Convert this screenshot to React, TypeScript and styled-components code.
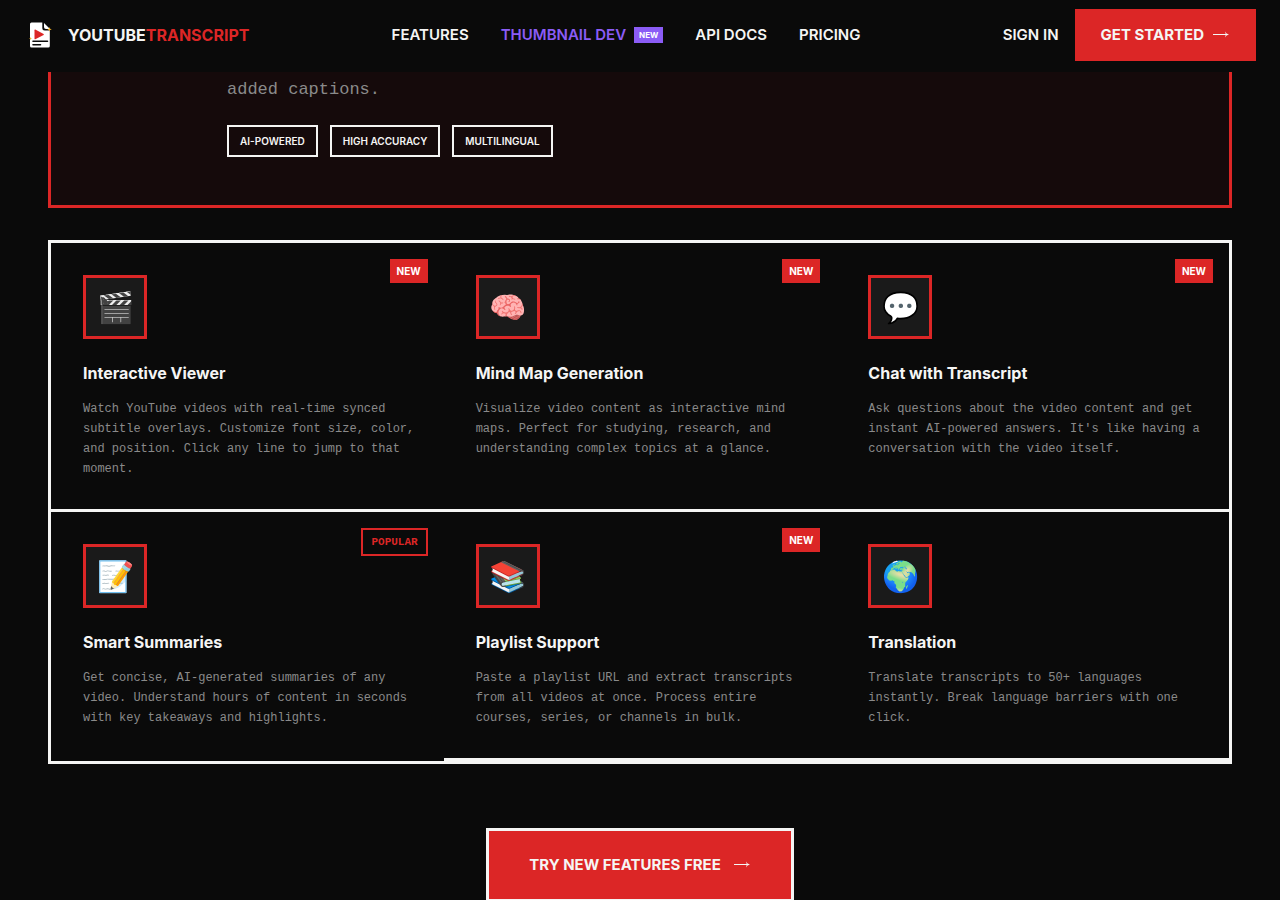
import React from "react";
import styled, { createGlobalStyle, css } from "styled-components";

const color = {
  ink: "#0a0a0a",
  paper: "#f5f5f4",
  red: "#dc2626",
  violet: "#8b5cf6",
  muted: "#8a8a8a",
  tile: "#1a1a1a",
  tint: "#150a0b",
};
const sans = `Inter, "Liberation Sans", sans-serif`;
const mono = `"Liberation Mono", "DejaVu Sans Mono", monospace`;

const GlobalStyle = createGlobalStyle`
  *, *::before, *::after { box-sizing: border-box; }
  body {
    margin: 0;
    background: ${color.ink};
    color: ${color.paper};
    font-family: ${sans};
  }
`;

const Header = styled.header`
  position: sticky;
  top: 0;
  z-index: 10;
  display: flex;
  align-items: center;
  justify-content: space-between;
  min-height: 72px;
  padding: 9px 24px 11px;
  background: ${color.ink};
`;

const Brand = styled.a`
  display: flex;
  align-items: center;
  gap: 12px;
  color: ${color.paper};
  font-size: 16px;
  font-weight: 700;
  line-height: 24px;
  text-decoration: none;
`;

const BrandAccent = styled.span`
  color: ${color.red};
`;

const Nav = styled.nav`
  display: flex;
  align-items: center;
  gap: 32px;
`;

const Actions = styled.div`
  display: flex;
  align-items: center;
  gap: 16px;
`;

const NavLink = styled.a<{ $accent?: boolean }>`
  display: inline-flex;
  align-items: center;
  gap: 8px;
  color: ${(p) => (p.$accent ? color.violet : color.paper)};
  font-size: 15px;
  font-weight: 600;
  line-height: 20px;
  text-decoration: none;
`;

const NavBadge = styled.span`
  padding: 0 5px;
  background: ${color.violet};
  color: #fff;
  font-size: 8px;
  font-weight: 700;
  line-height: 16px;
`;

const Button = styled.button<{ $large?: boolean }>`
  display: inline-flex;
  align-items: center;
  gap: 8px;
  padding: 16px 26px;
  border: 0;
  background: ${color.red};
  color: ${color.paper};
  font-family: ${sans};
  font-size: 15px;
  font-weight: 700;
  line-height: 20px;
  cursor: pointer;
  ${(p) =>
    p.$large &&
    css`
      gap: 12px;
      padding: 24px 40px;
      border: 3px solid ${color.paper};
    `}
`;

const Main = styled.main`
  padding: 0 48px 64px;
`;

const Spotlight = styled.section`
  padding: 0 48px 48px 176px;
  border: 3px solid ${color.red};
  border-top: 0;
  background: ${color.tint};
`;

const SpotlightText = styled.p`
  margin: 0 0 18px;
  color: ${color.muted};
  font-family: ${mono};
  font-size: 17px;
  line-height: 35px;
`;

const Tags = styled.ul`
  display: flex;
  flex-wrap: wrap;
  gap: 12px;
  margin: 0;
  padding: 0;
  list-style: none;
`;

const Tag = styled.li`
  padding: 6px 11px;
  border: 2px solid ${color.paper};
  font-size: 10px;
  font-weight: 600;
  line-height: 16px;
`;

const FeatureGrid = styled.section`
  display: grid;
  grid-template-columns: repeat(3, 1fr);
  margin-top: 32px;
  border: 3px solid ${color.paper};
`;

const Card = styled.article`
  position: relative;
  padding: 32px 28px 30px 32px;
  border-bottom: 3px solid ${color.paper};

  &:nth-child(4) {
    border-bottom: 0;
  }
`;

const CardIcon = styled.div`
  display: flex;
  align-items: center;
  justify-content: center;
  width: 64px;
  height: 64px;
  border: 3px solid ${color.red};
  background: ${color.tile};
  font-size: 30px;
  line-height: 1;
`;

const CardTitle = styled.h3`
  margin: 24px 0 16px;
  font-size: 16px;
  font-weight: 700;
  line-height: 20px;
`;

const CardText = styled.p`
  margin: 0;
  color: ${color.muted};
  font-family: ${mono};
  font-size: 12px;
  line-height: 20px;
`;

const CardBadge = styled.span<{ $outlined: boolean }>`
  position: absolute;
  top: 16px;
  right: 16px;
  padding: 4px 7px;
  background: ${color.red};
  color: #fff;
  font-size: 10px;
  font-weight: 700;
  line-height: 16px;
  ${(p) =>
    p.$outlined &&
    css`
      padding: 4px 8px;
      border: 2px solid ${color.red};
      background: none;
      color: ${color.red};
      font-family: ${mono};
      font-size: 11px;
    `}
`;

const CallToAction = styled.div`
  display: flex;
  justify-content: center;
  margin-top: 64px;
`;

const Logo = () => (
  <svg width="32" height="32" viewBox="0 0 32 32" aria-hidden="true">
    <path d="M7.500 3.500H18.300V9Q18.300 11.500 20.800 11.500H25.800V27Q25.800 28.500 24.300 28.500H7.500Q6 28.500 6 27V5Q6 3.500 7.500 3.500Z" fill="#fff" />
    <path d="M20 4L26 10H22Q20 10 20 8Z" fill="#fff" />
    <path d="M11.300 10.600L19.600 15Q20.200 15.500 19.600 16L11.300 20.300Q10.500 20.500 10.500 19.700V11.200Q10.500 10.300 11.300 10.600Z" fill={color.red} />
    <path d="M9 22.300H23.500M9 25.700H16.500" stroke="#0a0a0a" strokeWidth="1.600" strokeLinecap="round" />
    <path d="M25.500 8L26.100 9.700L27.800 10.300L26.100 10.900L25.500 12.500L24.900 10.900L23.300 10.300L24.900 9.700Z" fill="#f5b52a" />
    <path d="M6.500 18L7 19.200L8 19.600L7 20L6.500 21L6 20L5 19.600L6 19.200Z" fill="#f5b52a" />
  </svg>
);

const Arrow = () => (
  <svg width="18" height="12" viewBox="0 0 18 12" aria-hidden="true">
    <path d="M1 5.500H15" stroke="currentColor" strokeWidth="1" />
    <path d="M13 2.500Q14 4.800 17 5.500Q14 6.200 13 8.500L13.800 5.500Z" fill="currentColor" />
  </svg>
);

type Feature = { icon: string; title: string; text: string; badge?: "NEW" | "POPULAR" };

const features: Feature[] = [
  {
    icon: "🎬",
    title: "Interactive Viewer",
    text: "Watch YouTube videos with real-time synced subtitle overlays. Customize font size, color, and position. Click any line to jump to that moment.",
    badge: "NEW",
  },
  {
    icon: "🧠",
    title: "Mind Map Generation",
    text: "Visualize video content as interactive mind maps. Perfect for studying, research, and understanding complex topics at a glance.",
    badge: "NEW",
  },
  {
    icon: "💬",
    title: "Chat with Transcript",
    text: "Ask questions about the video content and get instant AI-powered answers. It's like having a conversation with the video itself.",
    badge: "NEW",
  },
  {
    icon: "📝",
    title: "Smart Summaries",
    text: "Get concise, AI-generated summaries of any video. Understand hours of content in seconds with key takeaways and highlights.",
    badge: "POPULAR",
  },
  {
    icon: "📚",
    title: "Playlist Support",
    text: "Paste a playlist URL and extract transcripts from all videos at once. Process entire courses, series, or channels in bulk.",
    badge: "NEW",
  },
  {
    icon: "🌍",
    title: "Translation",
    text: "Translate transcripts to 50+ languages instantly. Break language barriers with one click.",
  },
];

const tags = ["AI-POWERED", "HIGH ACCURACY", "MULTILINGUAL"];

export default function App() {
  return (
    <>
      <GlobalStyle />
      <Header>
        <Brand href="#">
          <Logo />
          <span>
            YOUTUBE<BrandAccent>TRANSCRIPT</BrandAccent>
          </span>
        </Brand>
        <Nav>
          <NavLink href="#features">FEATURES</NavLink>
          <NavLink href="#thumbnail" $accent>
            THUMBNAIL DEV <NavBadge>NEW</NavBadge>
          </NavLink>
          <NavLink href="#api">API DOCS</NavLink>
          <NavLink href="#pricing">PRICING</NavLink>
        </Nav>
        <Actions>
          <NavLink href="#signin">SIGN IN</NavLink>
          <Button type="button">
            GET STARTED <Arrow />
          </Button>
        </Actions>
      </Header>
      <Main>
        <Spotlight>
          <SpotlightText>added captions.</SpotlightText>
          <Tags>
            {tags.map((tag) => (
              <Tag key={tag}>{tag}</Tag>
            ))}
          </Tags>
        </Spotlight>
        <FeatureGrid id="features">
          {features.map((feature) => (
            <Card key={feature.title}>
              {feature.badge && <CardBadge $outlined={feature.badge === "POPULAR"}>{feature.badge}</CardBadge>}
              <CardIcon>{feature.icon}</CardIcon>
              <CardTitle>{feature.title}</CardTitle>
              <CardText>{feature.text}</CardText>
            </Card>
          ))}
        </FeatureGrid>
        <CallToAction>
          <Button type="button" $large>
            TRY NEW FEATURES FREE <Arrow />
          </Button>
        </CallToAction>
      </Main>
    </>
  );
}
